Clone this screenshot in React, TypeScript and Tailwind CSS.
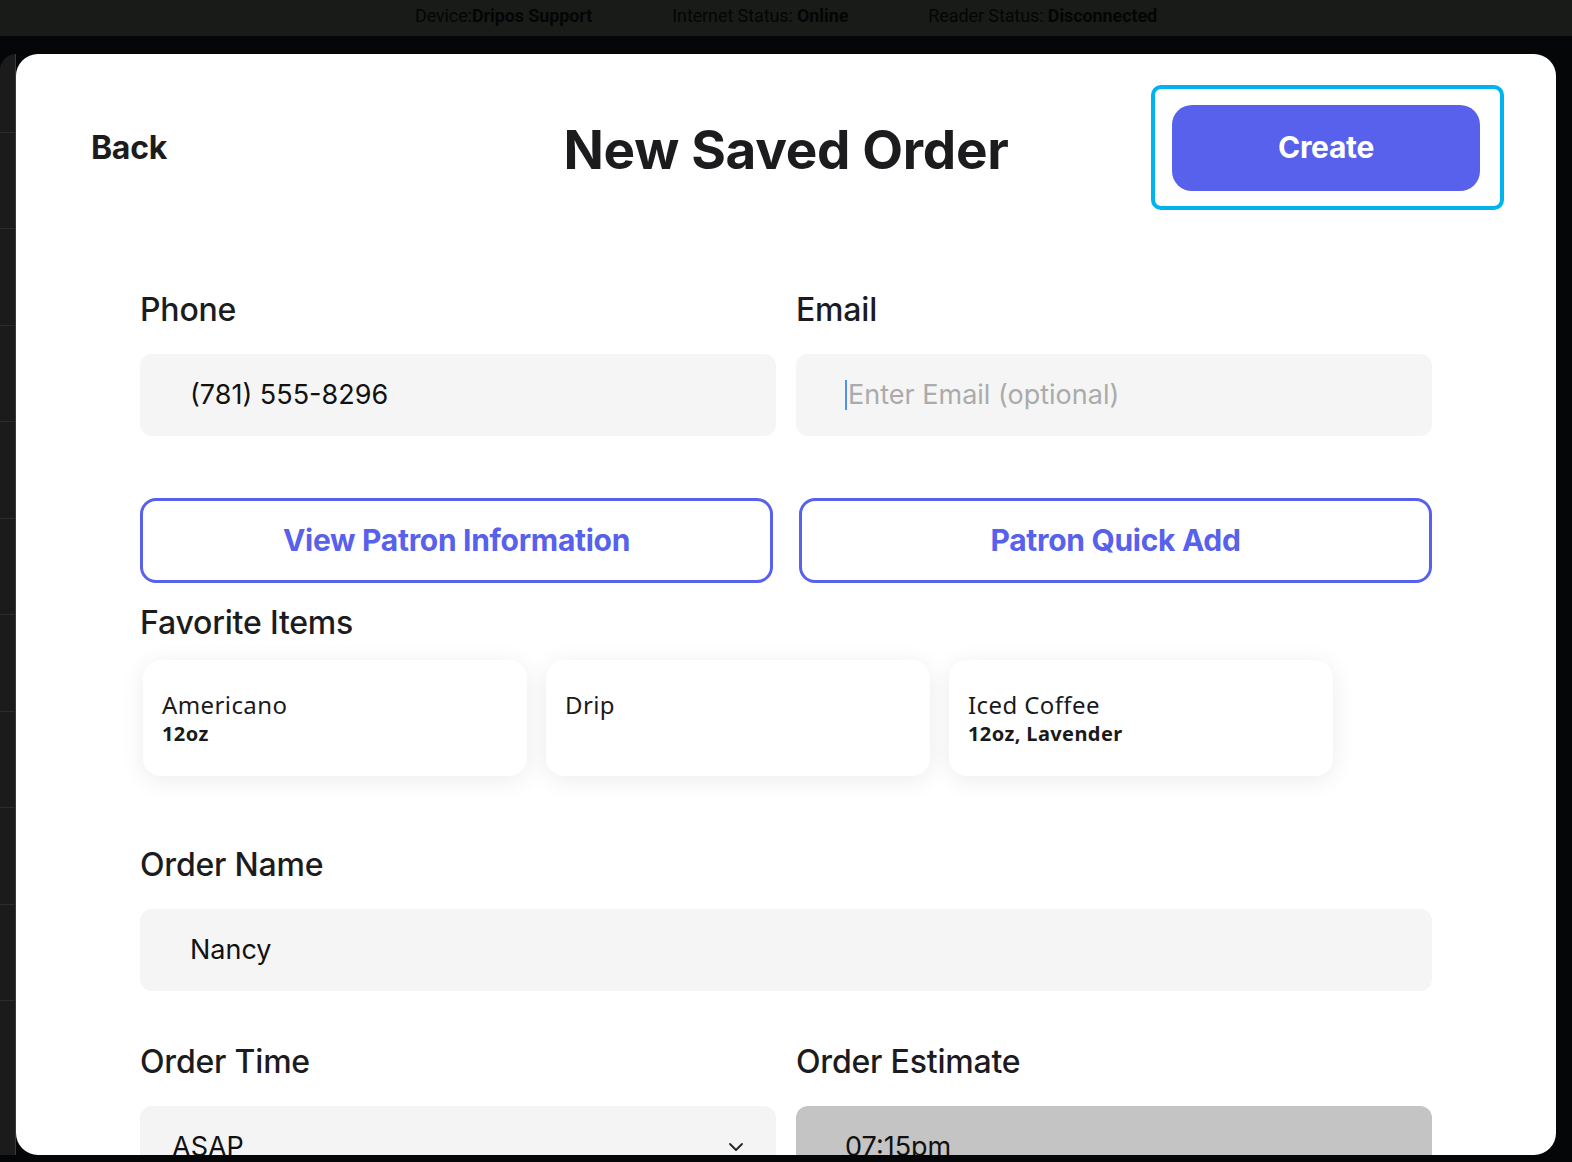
import { ChevronDown } from 'lucide-react';

const favorites = [
  { name: 'Americano', detail: '12oz' },
  { name: 'Drip', detail: '' },
  { name: 'Iced Coffee', detail: '12oz, Lavender' },
];

// strip rows peeking out from behind the sheet
const stripRows = [168, 264, 361, 457, 554, 650, 747, 843, 940, 1036];

function Label({ children }: { children: React.ReactNode }) {
  return (
    <div className="text-[32px] leading-[40px] font-medium text-[#1c1c1e] tracking-[-0.2px]">{children}</div>
  );
}

export default function App() {
  return (
    <div
      className="h-[1162px] w-[1572px] overflow-hidden bg-[#050608] flex flex-col"
      style={{ fontFamily: 'Inter, "Noto Sans", sans-serif' }}
    >
      {/* Status bar */}
      <div className="h-[36px] shrink-0 bg-[#191b19] flex items-center justify-center gap-[80px] pb-[6px] text-[18px] text-[#050505] font-['Roboto',sans-serif] tracking-[-0.1px]">
        <span>
          Device:<b className="font-bold">Dripos Support</b>
        </span>
        <span>
          Internet Status: <b className="font-bold">Online</b>
        </span>
        <span>
          Reader Status: <b className="font-bold">Disconnected</b>
        </span>
      </div>

      <div className="flex mt-[18px] h-[1101px]">
        {/* Underlying list, mostly hidden */}
        <div className="relative w-[16px] shrink-0 bg-[#1b1b1b] rounded-tl-[16px] border-r border-[#3a3a3a]">
          {stripRows.map((y) => (
            <div key={y} className="absolute left-0 right-0 h-px bg-[#2c2c2c]" style={{ top: y - 90 }} />
          ))}
        </div>

        {/* Sheet */}
        <div className="w-[1540px] h-[1101px] bg-white rounded-[22px] overflow-hidden flex flex-col">
          {/* Header */}
          <div className="grid grid-cols-[1fr_auto_1fr] items-center pt-[31px] px-[52px]">
            <button className="justify-self-start ml-[23px] text-[32px] font-bold text-[#1c1c1e] tracking-[-0.3px]">Back</button>
            <h1 className="text-[53px] font-bold text-[#1c1c1e] tracking-[-0.3px] leading-none pt-[6px]">New Saved Order</h1>
            <div className="justify-self-end w-[353px] h-[125px] border-[4px] border-[#00b2ee] rounded-[10px] flex items-center justify-center">
              <button className="w-[308px] h-[86px] bg-[#5761eb] rounded-[20px] text-white text-[30px] font-bold tracking-[-0.3px] -ml-[3px]">
                Create
              </button>
            </div>
          </div>

          <div className="px-[124px] flex flex-col">
            {/* Phone / Email */}
            <div className="grid grid-cols-2 gap-[20px] mt-[80px]">
              <div className="flex flex-col gap-[24px]">
                <Label>Phone</Label>
                <div className="h-[82px] bg-[#f5f5f5] rounded-[12px] flex items-center pl-[50px] text-[27px] text-[#111]">
                  (781) 555-8296
                </div>
              </div>
              <div className="flex flex-col gap-[24px]">
                <Label>Email</Label>
                <div className="h-[82px] bg-[#f5f5f5] rounded-[12px] flex items-center pl-[49px] text-[27px] text-[#ababab]">
                  <span className="w-[2px] h-[30px] bg-[#4d90fe] mr-[1px]" />
                  Enter Email (optional)
                </div>
              </div>
            </div>

            {/* Patron actions */}
            <div className="grid grid-cols-2 gap-[26px] mt-[62px]">
              <button className="h-[85px] border-[3px] border-[#5761eb] rounded-[16px] text-[#5761eb] text-[30px] font-bold tracking-[-0.3px]">
                View Patron Information
              </button>
              <button className="h-[85px] border-[3px] border-[#5761eb] rounded-[16px] text-[#5761eb] text-[30px] font-bold tracking-[-0.3px]">
                Patron Quick Add
              </button>
            </div>

            {/* Favorites */}
            <div className="mt-[20px]">
              <Label>Favorite Items</Label>
            </div>
            <div className="flex gap-[19px] mt-[17px] pl-[3px]">
              {favorites.map((f) => (
                <div
                  key={f.name}
                  className="w-[384px] h-[116px] bg-white rounded-[18px] shadow-[0_4px_24px_rgba(0,0,0,0.08)] px-[19px] pt-[30px] text-[#1a1a1a] font-['Noto_Sans',sans-serif] tracking-[0.4px]"
                >
                  <div className="text-[24px] leading-[30px]">{f.name}</div>
                  {f.detail && <div className="text-[20px] leading-[28px] font-bold">{f.detail}</div>}
                </div>
              ))}
            </div>

            {/* Order name */}
            <div className="mt-[69px] flex flex-col gap-[24px]">
              <Label>Order Name</Label>
              <div className="h-[82px] bg-[#f5f5f5] rounded-[12px] flex items-center pl-[50px] text-[27px] text-[#111]">
                Nancy
              </div>
            </div>

            {/* Time / estimate */}
            <div className="grid grid-cols-2 gap-[20px] mt-[51px]">
              <div className="flex flex-col gap-[24px]">
                <Label>Order Time</Label>
                <div className="h-[82px] bg-[#f4f4f4] rounded-[12px] flex items-center justify-between pl-[32px] pr-[28px] text-[27px] text-[#111]">
                  <span>ASAP</span>
                  <ChevronDown className="w-[24px] h-[24px] text-[#222]" strokeWidth={1.8} />
                </div>
              </div>
              <div className="flex flex-col gap-[24px]">
                <Label>Order Estimate</Label>
                <div className="h-[82px] bg-[#c4c4c4] rounded-[12px] flex items-center pl-[49px] text-[27px] text-[#111]">
                  07:15pm
                </div>
              </div>
            </div>
          </div>
        </div>
      </div>
    </div>
  );
}
